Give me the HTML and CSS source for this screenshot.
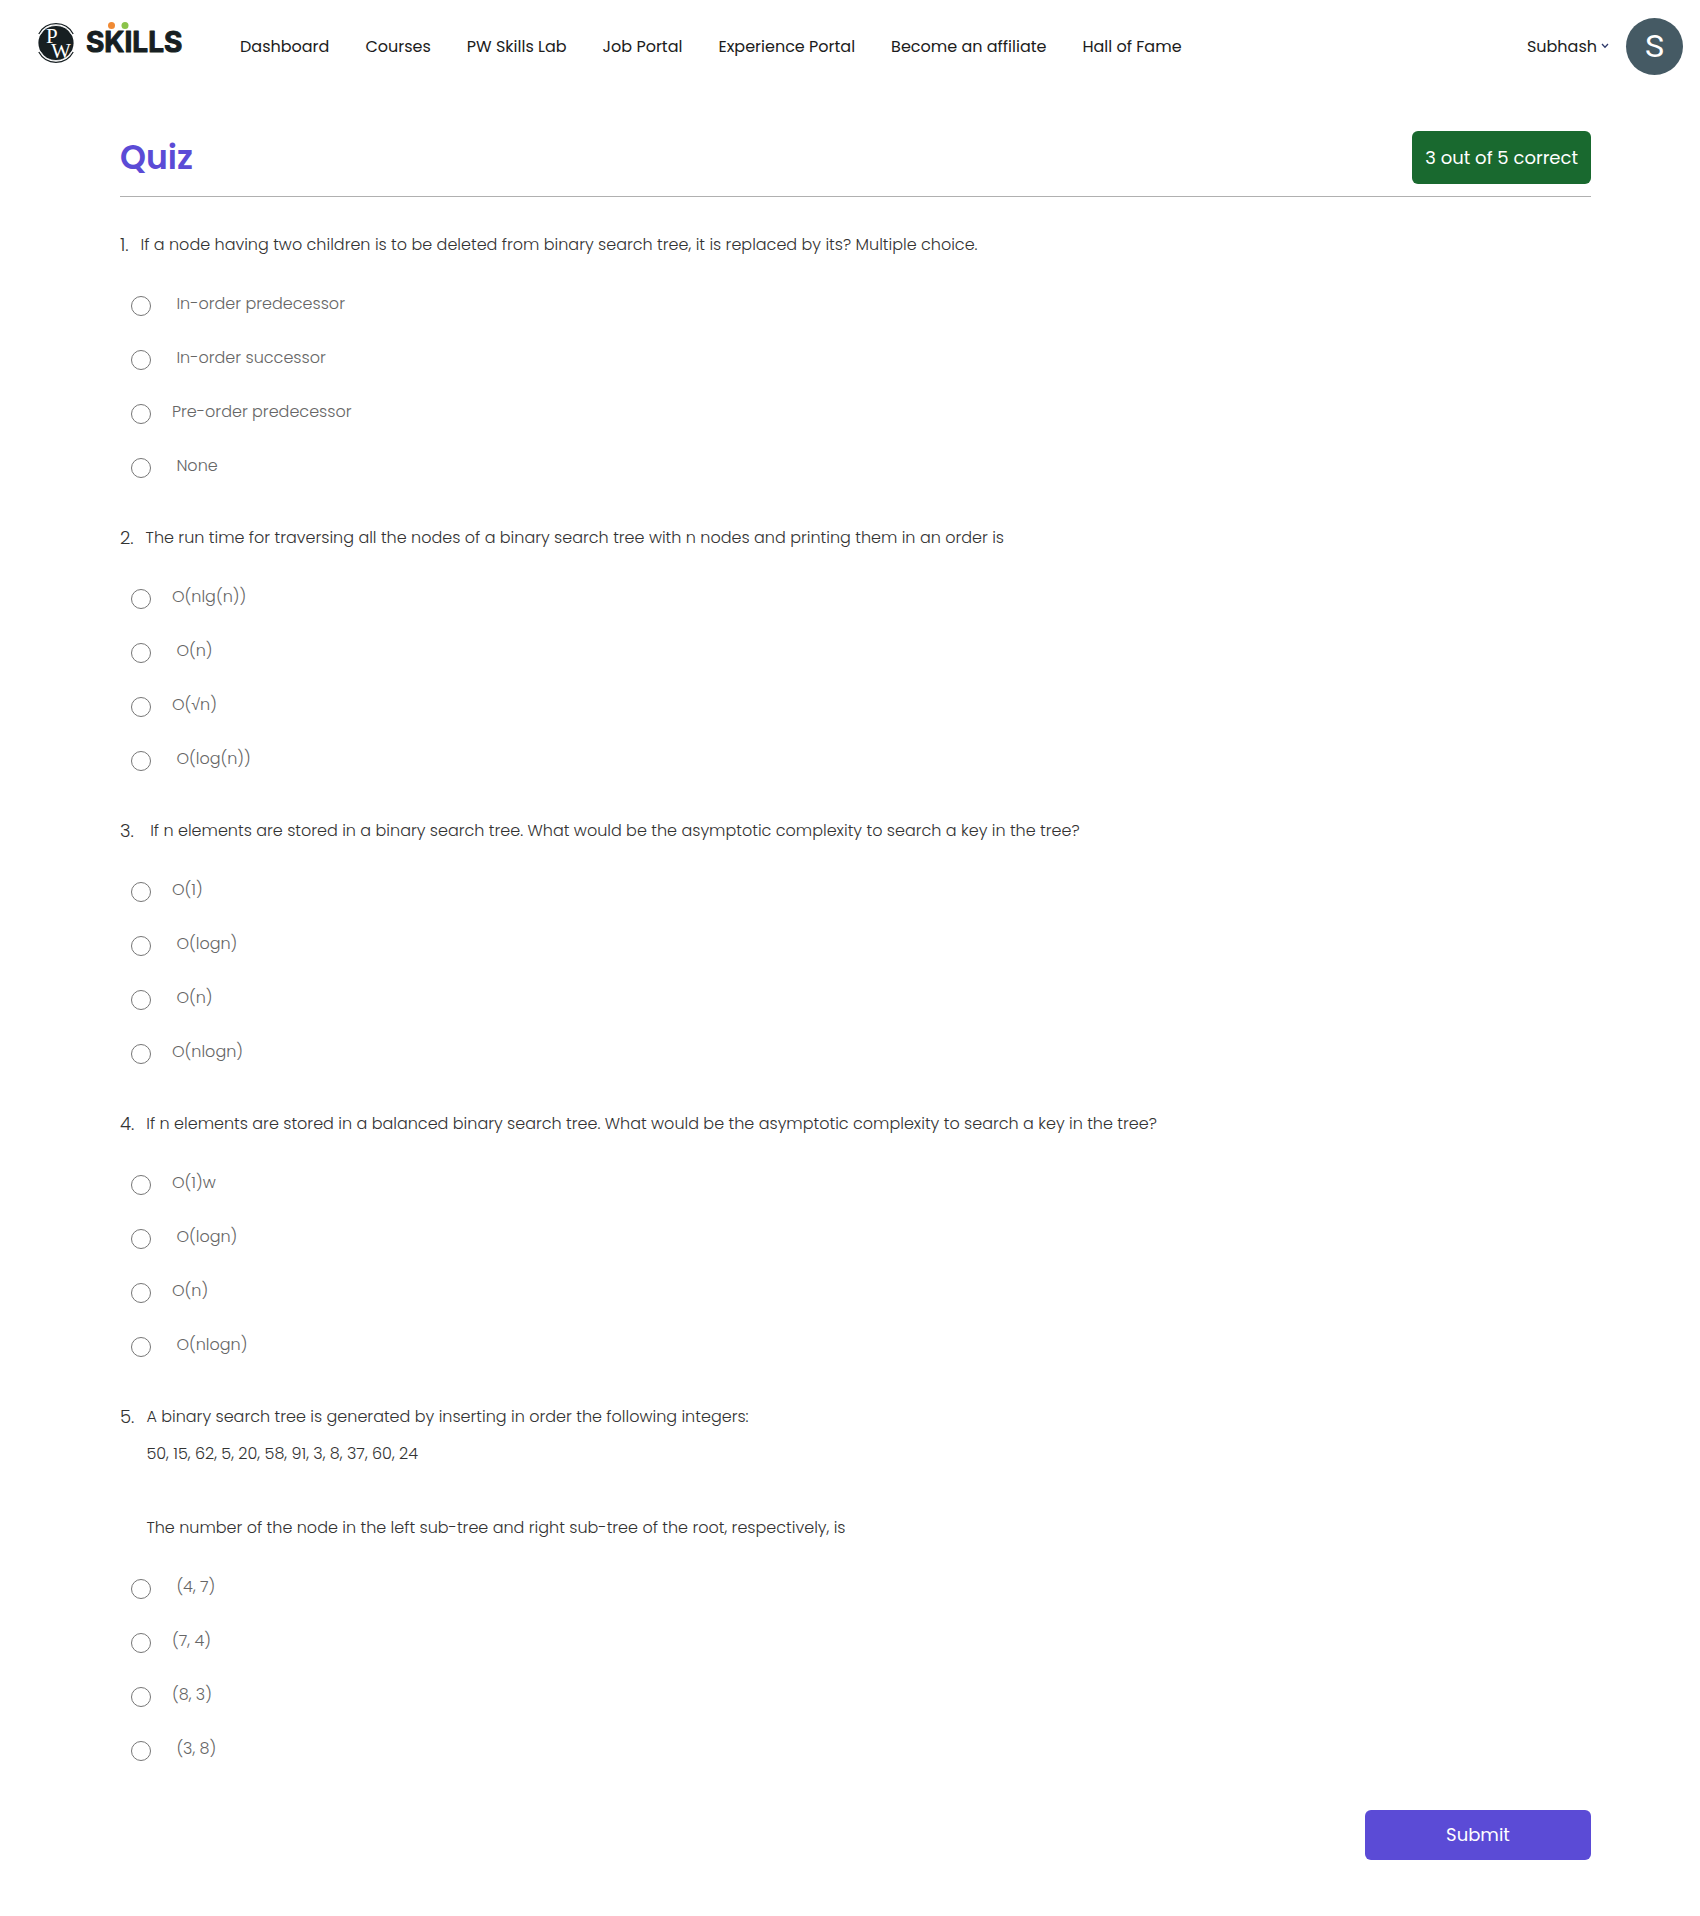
FILE: index.html
```html
<!DOCTYPE html>
<html lang="en">
<head>
<meta charset="utf-8">
<meta name="viewport" content="width=device-width, initial-scale=1">
<title>Quiz | PW Skills</title>
<link rel="stylesheet" href="styles.css">
</head>
<body>
<header class="header">
  <a class="logo" href="#" aria-label="PW Skills">
    <svg width="150" height="44" viewBox="0 0 150 44">
      <circle cx="20" cy="22" r="17.6" fill="#171f22"/>
      <path d="M2.800 13A19.500 19.500 0 0 1 37.200 13M2.800 31A19.500 19.500 0 0 0 37.200 31" fill="none" stroke="#171f22" stroke-width="1.200"/>
      <path d="M4.500 13.500A17.800 17.800 0 0 1 35.500 13.500M4.500 30.500A17.800 17.800 0 0 0 35.500 30.500" fill="none" stroke="#fff" stroke-width=".8"/>
      <text class="logo-mono"><tspan x="10" y="22">P</tspan><tspan x="15" y="37">W</tspan></text>
      <text class="logo-word" x="50" y="31">SKILLS</text>
      <circle cx="75.500" cy="4.500" r="3.500" fill="#f08a34"/>
      <circle cx="89" cy="4.500" r="3.500" fill="#8bc34a"/>
    </svg>
  </a>
  <nav class="nav">
    <a href="#">Dashboard</a>
    <a href="#">Courses</a>
    <a href="#">PW Skills Lab</a>
    <a href="#">Job Portal</a>
    <a href="#">Experience Portal</a>
    <a href="#">Become an affiliate</a>
    <a href="#">Hall of Fame</a>
  </nav>
  <button class="user" type="button">
    <span>Subhash</span>
    <svg width="8" height="6" viewBox="0 0 8 6"><path d="M1 1l3 3.200L7 1" fill="none" stroke="#2f3a6b" stroke-width="1.300"/></svg>
    <span class="avatar">S</span>
  </button>
</header>
<main class="main">
  <div class="heading">
    <h1 class="title">Quiz</h1>
    <span class="score">3 out of 5 correct</span>
  </div>
  <form class="quiz">
    <fieldset class="question">
      <legend class="prompt"><span class="number">1.</span><span class="text">If a node having two children is to be deleted from binary search tree, it is replaced by its? Multiple choice.</span></legend>
      <label class="option"><input type="radio" name="q1"><span class="answer"> In-order predecessor</span></label>
      <label class="option"><input type="radio" name="q1"><span class="answer"> In-order successor</span></label>
      <label class="option"><input type="radio" name="q1"><span class="answer">Pre-order predecessor</span></label>
      <label class="option"><input type="radio" name="q1"><span class="answer"> None</span></label>
    </fieldset>
    <fieldset class="question">
      <legend class="prompt"><span class="number">2.</span><span class="text">The run time for traversing all the nodes of a binary search tree with n nodes and printing them in an order is</span></legend>
      <label class="option"><input type="radio" name="q2"><span class="answer">O(nlg(n))</span></label>
      <label class="option"><input type="radio" name="q2"><span class="answer"> O(n)</span></label>
      <label class="option"><input type="radio" name="q2"><span class="answer">O(<span class="math">√</span>n)</span></label>
      <label class="option"><input type="radio" name="q2"><span class="answer"> O(log(n))</span></label>
    </fieldset>
    <fieldset class="question">
      <legend class="prompt"><span class="number">3.</span><span class="text"> If n elements are stored in a binary search tree. What would be the asymptotic complexity to search a key in the tree?</span></legend>
      <label class="option"><input type="radio" name="q3"><span class="answer">O(1)</span></label>
      <label class="option"><input type="radio" name="q3"><span class="answer"> O(logn)</span></label>
      <label class="option"><input type="radio" name="q3"><span class="answer"> O(n)</span></label>
      <label class="option"><input type="radio" name="q3"><span class="answer">O(nlogn)</span></label>
    </fieldset>
    <fieldset class="question">
      <legend class="prompt"><span class="number">4.</span><span class="text">If n elements are stored in a balanced binary search tree. What would be the asymptotic complexity to search a key in the tree?</span></legend>
      <label class="option"><input type="radio" name="q4"><span class="answer">O(1)w</span></label>
      <label class="option"><input type="radio" name="q4"><span class="answer"> O(logn)</span></label>
      <label class="option"><input type="radio" name="q4"><span class="answer">O(n)</span></label>
      <label class="option"><input type="radio" name="q4"><span class="answer"> O(nlogn)</span></label>
    </fieldset>
    <fieldset class="question">
      <legend class="prompt"><span class="number">5.</span><span class="text">A binary search tree is generated by inserting in order the following integers:<br>50, 15, 62, 5, 20, 58, 91, 3, 8, 37, 60, 24<br><br>The number of the node in the left sub-tree and right sub-tree of the root, respectively, is</span></legend>
      <label class="option"><input type="radio" name="q5"><span class="answer"> (4, 7)</span></label>
      <label class="option"><input type="radio" name="q5"><span class="answer">(7, 4)</span></label>
      <label class="option"><input type="radio" name="q5"><span class="answer">(8, 3)</span></label>
      <label class="option"><input type="radio" name="q5"><span class="answer"> (3, 8)</span></label>
    </fieldset>
    <button class="submit" type="button">Submit</button>
  </form>
</main>
</body>
</html>
```
FILE: styles.css
```css
* {
  box-sizing: border-box;
}

body {
  margin: 0;
  background: #fff;
  color: #1c1c1c;
  font-family: Poppins, Inter, sans-serif;
  font-size: 16px;
}

button {
  border: 0;
  font: inherit;
  cursor: pointer;
}

.header {
  display: flex;
  align-items: center;
  height: 92px;
  padding: 0 17px 0 36px;
}

.logo {
  display: flex;
  margin: 0 54px 6px 0;
}

.logo-mono {
  fill: #fff;
  font: 21px "Liberation Serif", serif;
}

.logo-word {
  fill: #171f22;
  stroke: #171f22;
  stroke-width: 1px;
  stroke-linejoin: round;
  font: 700 28px Inter, sans-serif;
}

.nav {
  display: flex;
  gap: 36px;
}

.nav a {
  color: inherit;
  text-decoration: none;
  white-space: nowrap;
}

.user {
  display: flex;
  align-items: center;
  gap: 4px;
  margin-left: auto;
  padding: 0;
  background: none;
  color: inherit;
}

.avatar {
  display: grid;
  place-items: center;
  width: 57px;
  height: 57px;
  margin-left: 13px;
  border-radius: 50%;
  background: #455a64;
  color: #fff;
  font: 32px Roboto, sans-serif;
}

.main {
  padding: 39px 109px 56px 120px;
}

.heading {
  display: flex;
  align-items: center;
  justify-content: space-between;
  padding-bottom: 12px;
  border-bottom: 1px solid #b0b0b0;
}

.title {
  margin: 0;
  color: #5b4bd6;
  font-size: 33px;
  font-weight: 600;
}

.score {
  padding: 0 13px;
  border-radius: 6px;
  background: #19692f;
  color: #fff;
  font-size: 18px;
  line-height: 53px;
}

.quiz {
  display: flex;
  flex-direction: column;
  gap: 24px;
  padding-top: 29px;
}

.question {
  min-width: 0;
  margin: 0;
  padding: 0;
  border: 0;
}

.prompt {
  display: flex;
  gap: 12px;
  margin-bottom: 16px;
  padding: 0;
  color: #333;
  font-weight: 300;
  line-height: 37px;
}

.number {
  font-size: 18px;
}

.text,
.answer {
  white-space: pre-wrap;
}

.option {
  display: flex;
  align-items: center;
  gap: 21px;
  height: 54px;
  padding-left: 11px;
}

.option input {
  width: 20px;
  height: 20px;
  margin: 0;
}

.answer {
  padding-bottom: 6px;
  color: #666;
  font-weight: 300;
}

.math {
  font-family: "Liberation Sans", sans-serif;
}

.submit {
  align-self: flex-end;
  width: 226px;
  margin-top: 8px;
  border-radius: 6px;
  background: #5b4bd6;
  color: #fff;
  font-size: 18px;
  line-height: 50px;
  padding: 0;
}
```
